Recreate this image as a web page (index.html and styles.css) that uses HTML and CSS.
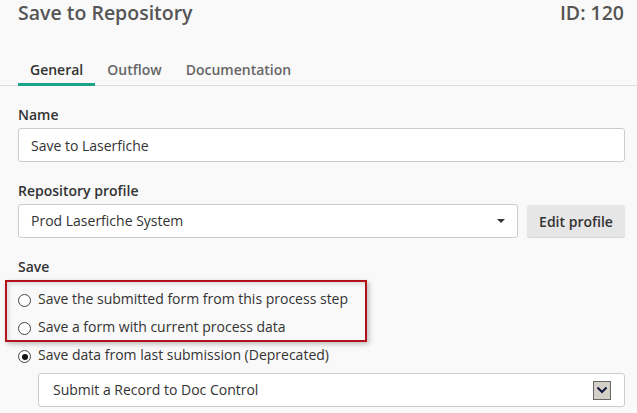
FILE: index.html
```html
<!DOCTYPE html>
<html>
<head>
    <title>Save to Repository</title>
    <link rel="stylesheet" href="styles.css">
</head>
<body>
    <!-- Step header -->
    <div class="header">
        <h1>Save to Repository</h1>
        <span class="step-id">ID: 120</span>
    </div>

    <!-- Tabs -->
    <ul class="tabs">
        <li class="active">General</li>
        <li>Outflow</li>
        <li>Documentation</li>
    </ul>

    <div class="content">
        <!-- Name -->
        <div class="field">
            <label>Name</label>
            <input type="text" class="text-input" value="Save to Laserfiche">
        </div>

        <!-- Repository profile -->
        <div class="field">
            <label>Repository profile</label>
            <div class="profile-row">
                <div class="select">
                    <span>Prod Laserfiche System</span>
                    <span class="caret"></span>
                </div>
                <button class="btn">Edit profile</button>
            </div>
        </div>

        <!-- Save options -->
        <div class="field">
            <label>Save</label>
            <div class="highlight">
                <div class="radio-row"><span class="radio"></span>Save the submitted form from this process step</div>
                <div class="radio-row"><span class="radio"></span>Save a form with current process data</div>
            </div>
            <div class="radio-row"><span class="radio checked"></span>Save data from last submission (Deprecated)</div>
            <div class="select legacy">
                <span>Submit a Record to Doc Control</span>
                <span class="win-arrow">
                    <svg width="12" height="8" viewBox="0 0 12 8"><path d="M1.5 1.5 L6 6 L10.5 1.5" fill="none" stroke="#101840" stroke-width="2"/></svg>
                </span>
            </div>
        </div>
    </div>
</body>
</html>
```

FILE: styles.css
```css
body {
    font-family: "Open Sans", Arial, sans-serif;
    font-size: 14px;
    line-height: 20px;
    color: #333;
    background-color: #f9f9f9;
    margin: 0;
    padding: 0;
}

.header {
    display: flex;
    justify-content: space-between;
    align-items: baseline;
    margin-top: 1px;
    padding: 0 13px 0 18px;
}

.header h1,
.step-id {
    margin: 0;
    font-size: 19.5px;
    line-height: 24px;
    font-weight: 600;
    color: #555;
}

.tabs {
    display: flex;
    list-style: none;
    margin: 35px 0 0 0;
    padding: 0 0 0 18px;
    border-bottom: 1px solid #ddd;
}

.tabs li {
    padding: 0 12px 3px 12px;
    margin-bottom: -1px;
    font-weight: 600;
    color: #666;
    border-bottom: 3px solid transparent;
}

.tabs li.active {
    color: #333;
    border-bottom-color: #1aa386;
}

.content {
    padding: 0 12px 0 18px;
}

.field {
    margin-top: 19px;
}

.field label {
    display: block;
    font-weight: 600;
    margin-bottom: 3px;
}

.text-input,
.select {
    box-sizing: border-box;
    height: 34px;
    width: 100%;
    background: #fff;
    border: 1px solid #ccc;
    border-radius: 3px;
    font-family: inherit;
    font-size: 14px;
    color: #333;
    padding: 0 12px;
    margin: 0;
}

.select {
    display: flex;
    align-items: center;
    justify-content: space-between;
}

.profile-row {
    display: flex;
    gap: 9px;
    align-items: flex-start;
}

.profile-row .select {
    flex: 1;
    padding-right: 12px;
}

.caret {
    width: 0;
    height: 0;
    border-left: 4px solid transparent;
    border-right: 4px solid transparent;
    border-top: 4px solid #333;
}

.btn {
    box-sizing: border-box;
    width: 98px;
    height: 32px;
    margin-top: 1px;
    border: none;
    border-radius: 3px;
    background-color: #e6e6e6;
    box-shadow: 0 1px 1px rgba(0,0,0,0.15);
    font-family: inherit;
    font-size: 14px;
    font-weight: 600;
    color: #333;
    padding: 0;
}

.highlight {
    box-sizing: border-box;
    width: 362px;
    margin: 2px 0 0 -13px;
    padding: 7px 0 3px 11px;
    border: 2px solid #b3111c;
    box-shadow: 2px 2px 5px rgba(0,0,0,0.25), inset 2px 2px 4px rgba(0,0,0,0.12);
}

.radio-row {
    display: flex;
    align-items: center;
    line-height: 20px;
    margin-bottom: 8px;
    white-space: nowrap;
}

.highlight .radio-row:last-child {
    margin-bottom: 0;
}

.highlight + .radio-row {
    margin-top: 3px;
    margin-bottom: 8px;
}

.radio {
    box-sizing: border-box;
    width: 13px;
    height: 13px;
    margin: 3px 7px 0 0;
    border: 1px solid #444;
    border-radius: 50%;
    background: #fff;
    display: flex;
    align-items: center;
    justify-content: center;
}

.radio.checked::after {
    content: "";
    width: 6px;
    height: 6px;
    border-radius: 50%;
    background: #111;
}

.select.legacy {
    margin-left: 20px;
    width: auto;
    padding: 0 13px 0 14px;
}

.win-arrow {
    box-sizing: border-box;
    width: 18px;
    height: 19px;
    background: #d4d0c8;
    border: 1px solid #666;
    display: flex;
    align-items: center;
    justify-content: center;
}
```
